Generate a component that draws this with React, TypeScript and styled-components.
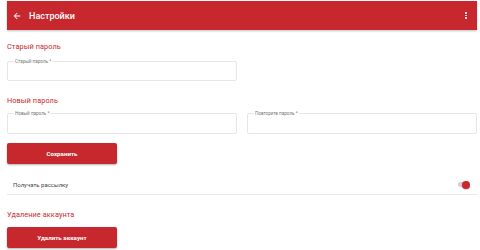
import React, { useState } from 'react'
import styled, { createGlobalStyle } from 'styled-components'

const RED = '#c7282d'

const GlobalStyle = createGlobalStyle`
  html, body {
    margin: 0;
    padding: 0;
    background: #ffffff;
    font-family: Roboto, "Liberation Sans", Arial, sans-serif;
  }
`

const Page = styled.div`
  width: 480px;
  height: 250px;
  padding: 1px 3px 0 7px;
  box-sizing: border-box;
  overflow: hidden;
`

const Header = styled.header`
  display: flex;
  align-items: center;
  height: 29px;
  padding: 0 8px 0 5px;
  background: ${RED};
  color: #ffffff;
  box-shadow: 0 1px 2px rgba(0, 0, 0, 0.25);
`

const BackButton = styled.span`
  display: flex;
  align-items: center;
  width: 10px;
  margin-right: 7px;
`

const Title = styled.h1`
  flex: 1;
  margin: 0;
  font-size: 9px;
  font-weight: 500;
`

const MenuButton = styled.span`
  display: flex;
  flex-direction: column;
  align-items: center;
  gap: 1px;
  width: 6px;
`

const Dot = styled.i`
  display: block;
  width: 1.6px;
  height: 1.6px;
  border-radius: 50%;
  background: #ffffff;
`

const SectionTitle = styled.h2<{ top: number }>`
  margin: ${({ top }) => top}px 0 0;
  height: 12px;
  line-height: 12px;
  font-size: 7.3px;
  font-weight: 400;
  letter-spacing: 0.1px;
  color: ${RED};
`

const FieldRow = styled.div<{ top: number }>`
  display: grid;
  grid-template-columns: 230px 230px;
  column-gap: 10px;
  margin-top: ${({ top }) => top}px;
`

const Field = styled.fieldset<{ h: number }>`
  margin: 0;
  padding: 0 6px;
  height: ${({ h }) => h}px;
  box-sizing: border-box;
  border: 1px solid #e6e6e6;
  border-radius: 2px;
  min-width: 0;
`

const Legend = styled.legend`
  padding: 0 1px;
  margin-left: 0;
  font-size: 4.6px;
  line-height: 5px;
  color: #777777;
`

const Button = styled.button<{ top: number }>`
  display: block;
  width: 110px;
  height: 21px;
  margin-top: ${({ top }) => top}px;
  border: none;
  border-radius: 2px;
  background: ${RED};
  color: #ffffff;
  font-family: inherit;
  font-size: 6.2px;
  font-weight: 700;
  box-shadow: 0 1px 2px rgba(0, 0, 0, 0.3);
  cursor: pointer;
`

const ToggleRow = styled.div`
  display: flex;
  align-items: center;
  justify-content: space-between;
  height: 19px;
  margin-top: 11px;
  padding: 0 6px;
  border-bottom: 1px solid #e8e8e8;
`

const ToggleLabel = styled.span`
  font-size: 6px;
  color: #444444;
`

const Track = styled.span<{ on: boolean }>`
  position: relative;
  display: block;
  width: 11px;
  height: 5px;
  margin-right: 2px;
  border-radius: 3px;
  background: ${({ on }) => (on ? '#e2c9ca' : '#d6d6d6')};
  cursor: pointer;
`

const Thumb = styled.span<{ on: boolean }>`
  position: absolute;
  top: -1.5px;
  left: ${({ on }) => (on ? '4px' : '-1px')};
  width: 8px;
  height: 8px;
  border-radius: 50%;
  background: ${({ on }) => (on ? RED : '#f5f5f5')};
  box-shadow: 0 0.5px 1px rgba(0, 0, 0, 0.3);
`

export default function App() {
  const [subscribed, setSubscribed] = useState(true)

  return (
    <>
      <GlobalStyle />
      <Page>
        <Header>
          <BackButton>
            <svg width="10" height="10" viewBox="0 0 24 24" fill="#fff">
              <path d="M20 11H7.83l5.59-5.59L12 4l-8 8 8 8 1.41-1.41L7.83 13H20v-2z" />
            </svg>
          </BackButton>
          <Title>Настройки</Title>
          <MenuButton>
            <Dot />
            <Dot />
            <Dot />
          </MenuButton>
        </Header>

        <SectionTitle top={11}>Старый пароль</SectionTitle>
        <FieldRow top={6}>
          <Field h={22}>
            <Legend>Старый пароль *</Legend>
          </Field>
        </FieldRow>

        <SectionTitle top={14}>Новый пароль</SectionTitle>
        <FieldRow top={4}>
          <Field h={23}>
            <Legend>Новый пароль *</Legend>
          </Field>
          <Field h={23}>
            <Legend>Повторите пароль *</Legend>
          </Field>
        </FieldRow>
        <Button top={9}>Сохранить</Button>

        <ToggleRow>
          <ToggleLabel>Получать рассылку</ToggleLabel>
          <Track on={subscribed} onClick={() => setSubscribed(!subscribed)}>
            <Thumb on={subscribed} />
          </Track>
        </ToggleRow>

        <SectionTitle top={14}>Удаление аккаунта</SectionTitle>
        <Button top={6}>Удалить аккаунт</Button>
      </Page>
    </>
  )
}
